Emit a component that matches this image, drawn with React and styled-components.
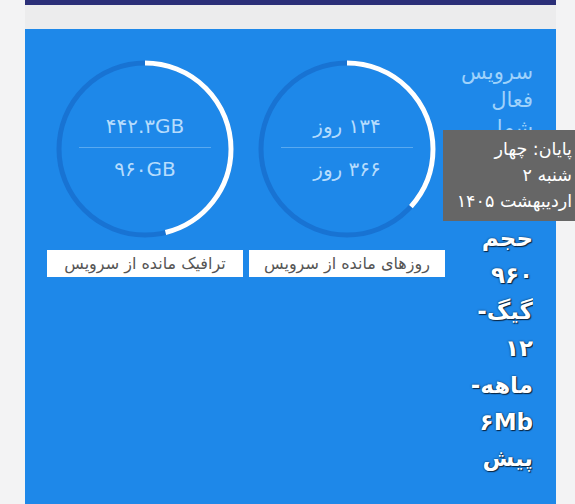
import React from "react";
import styled, { createGlobalStyle } from "styled-components";

const GlobalStyle = createGlobalStyle`
  html, body {
    margin: 0;
    padding: 0;
    background: #f3f3f4;
    overflow: hidden;
    font-family: "DejaVu Sans", "Noto Sans", sans-serif;
  }
`;

const gauges = [
  { label: "روزهای مانده از سرویس", top: "۱۳۴ روز", bottom: "۳۶۶ روز", ratio: 134 / 366 },
  { label: "ترافیک مانده از سرویس", top: "۴۴۲.۳GB", bottom: "۹۶۰GB", ratio: 442.3 / 960 },
];

const R = 86;
const C = 2 * Math.PI * R;

const Gauge = ({ item }) => (
  <GaugeCard>
    <Dial>
      <svg width="178" height="178" viewBox="0 0 178 178">
        <circle cx="89" cy="89" r={R} fill="none" stroke="#1873d3" strokeWidth="5" />
        <circle
          cx="89"
          cy="89"
          r={R}
          fill="none"
          stroke="#ffffff"
          strokeWidth="5"
          strokeDasharray={`${C * item.ratio} ${C}`}
          transform="rotate(-90 89 89)"
        />
      </svg>
      <DialText>
        <Value>{item.top}</Value>
        <Divider />
        <Value>{item.bottom}</Value>
      </DialText>
    </Dial>
    <Label>{item.label}</Label>
  </GaugeCard>
);

const App = () => {
  return (
    <Page>
      <GlobalStyle />
      <TopBar />
      <Gap />
      <Panel>
        <Info>
          <Title>سرویس فعال شما</Title>
          <Plan>حجم ۹۶۰ گیگ- ۱۲ ماهه- ۶Mb پیش</Plan>
        </Info>
        <Gauges>
          {gauges.map((g) => (
            <Gauge key={g.label} item={g} />
          ))}
        </Gauges>
        <Tooltip>
          پایان: چهار
          <br />
          شنبه ۲
          <br />
          اردیبهشت ۱۴۰۵
        </Tooltip>
      </Panel>
    </Page>
  );
};

const Page = styled.div`
  width: 531px;
  margin-left: 25px;
  height: 504px;
`;

const TopBar = styled.div`
  height: 5px;
  background: #2b2f78;
`;

const Gap = styled.div`
  height: 24px;
  background: #ececed;
`;

const Panel = styled.div`
  position: relative;
  direction: rtl;
  display: flex;
  align-items: flex-start;
  height: 475px;
  background: #1e88e9;
  padding: 31px 0 0 22px;
  box-sizing: border-box;
`;

const Info = styled.div`
  width: 74px;
  padding: 0 23px 0 14px;
  flex-shrink: 0;
  margin-top: -2px;
`;

const Title = styled.div`
  color: #9fd2fb;
  font-size: 21px;
  line-height: 28px;
`;

const Plan = styled.div`
  margin-top: 78px;
  color: #ffffff;
  font-size: 23px;
  font-weight: bold;
  line-height: 36.7px;
  text-shadow: 1px 1px 1px #0b2540, 0 0 2px #0b2540;
  overflow: hidden;
`;

const Gauges = styled.div`
  display: flex;
  gap: 6px;
`;

const GaugeCard = styled.div`
  width: 196px;
  display: flex;
  flex-direction: column;
  align-items: center;
  gap: 12px;
`;

const Dial = styled.div`
  display: grid;
  place-items: center;
  & > * {
    grid-area: 1 / 1;
  }
`;

const DialText = styled.div`
  width: 132px;
  display: flex;
  flex-direction: column;
  align-items: center;
  margin-top: -3px;
`;

const Value = styled.div`
  color: #b6dcfd;
  font-size: 20px;
  line-height: 24px;
`;

const Divider = styled.div`
  align-self: stretch;
  height: 1px;
  background: #59a9f0;
  margin: 9px 0 9px;
`;

const Label = styled.div`
  width: 100%;
  height: 27px;
  background: #ffffff;
  color: #555555;
  font-size: 16px;
  line-height: 27px;
  text-align: center;
  box-sizing: border-box;
`;

const Tooltip = styled.div`
  position: absolute;
  left: 418px;
  top: 101px;
  width: 132px;
  height: 91px;
  box-sizing: border-box;
  background: #666666;
  color: #ffffff;
  font-size: 17.5px;
  line-height: 26px;
  padding: 6px 3px 0 4px;
  text-align: right;
  white-space: nowrap;
`;

export default App;
